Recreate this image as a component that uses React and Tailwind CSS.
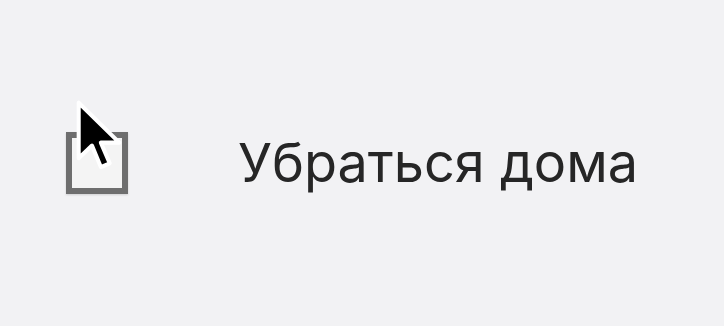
export default function App() {
    return (
        <div className="w-[724px] h-[326px] bg-[#f2f2f4] flex items-center pl-[66px] gap-[110px]" style={{ fontFamily: 'Inter, "Noto Sans", sans-serif' }}>
            <div className="relative">
                <div className="w-[62px] h-[62px] border-[6px] border-[#6e6e6e] bg-[#f4f4f4] shadow-[0_1px_2px_rgba(0,0,0,0.15)]" />
                {/* cursor */}
                <svg className="absolute left-[9px] top-[-33px] w-[48px] h-[74px]" viewBox="0 0 13 20">
                    <path d="M1 1 L1 16 L4.6 12.6 L7 18.4 L9.4 17.4 L7 11.8 L12 11.8 Z" fill="#000" stroke="#fff" strokeWidth="1.1" strokeLinejoin="round" />
                </svg>
            </div>
            <span className="text-[54px] leading-none text-[#262626]">Убраться дома</span>
        </div>
    )
}
